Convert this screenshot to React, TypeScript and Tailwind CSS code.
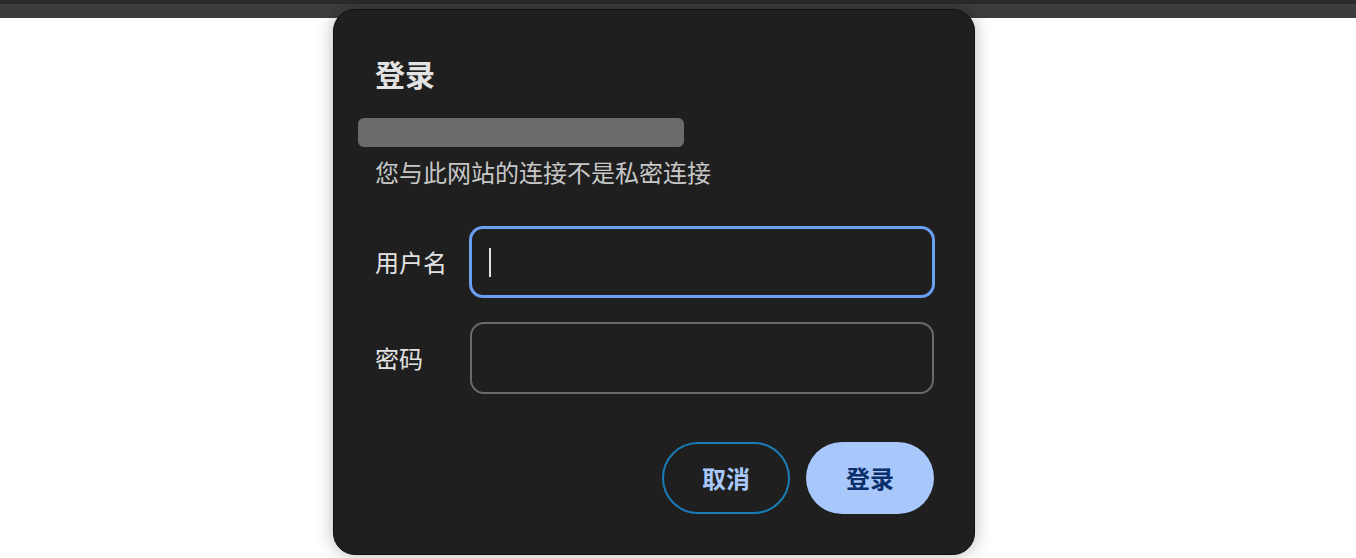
import React from "react";

export default function App() {
  return (
    <div
      className="relative w-[1356px] h-[558px] bg-white overflow-hidden"
      style={{ fontFamily: '"Noto Sans CJK SC", "Noto Sans", sans-serif' }}
    >
      <div className="h-[4px] bg-[#2b2b2b]" />
      <div className="h-[14px] bg-[#3d3d3d]" />

      <div className="absolute left-[333px] top-[9px] w-[642px] h-[546px] rounded-[22px] bg-[#1f1f1f] border border-[#111] shadow-[0_0_18px_rgba(0,0,0,0.28)] pt-[43px] pl-[41px] pr-[39px] flex flex-col">
        <h1 className="text-[30px] leading-[40px] font-bold text-[#e3e3e3]">登录</h1>
        <div className="mt-[25px] -ml-[17px] w-[326px] h-[29px] rounded-[6px] bg-[#6b6b6b]" />
        <p className="mt-[9px] text-[24px] leading-[32px] text-[#c7c7c7]">您与此网站的连接不是私密连接</p>

        <div className="mt-[38px] flex flex-col gap-[24px]">
          <div className="flex items-center">
            <label className="w-[94px] text-[24px] leading-[32px] text-[#e3e3e3]">用户名</label>
            <div className="flex-1 h-[72px] rounded-[14px] border-[3.5px] border-[#6b9ff2] flex items-center pl-[17px]">
              <div className="w-[1.5px] h-[29px] bg-[#e3e3e3]" />
            </div>
          </div>
          <div className="flex items-center">
            <label className="w-[94px] text-[24px] leading-[32px] text-[#e3e3e3]">密码</label>
            <div className="flex-1 h-[72px] rounded-[14px] border-2 border-[#6a6a6a] mx-[1px]" />
          </div>
        </div>

        <div className="mt-[48px] flex justify-end gap-[16px] pr-[1px]">
          <button className="w-[128px] h-[72px] rounded-full border-2 border-[#1a7cb6] text-[24px] font-bold text-[#a8c7fa]">
            取消
          </button>
          <button className="w-[128px] h-[72px] rounded-full bg-[#a8c7fa] text-[24px] font-bold text-[#0a2f6b]">
            登录
          </button>
        </div>
      </div>
    </div>
  );
}
